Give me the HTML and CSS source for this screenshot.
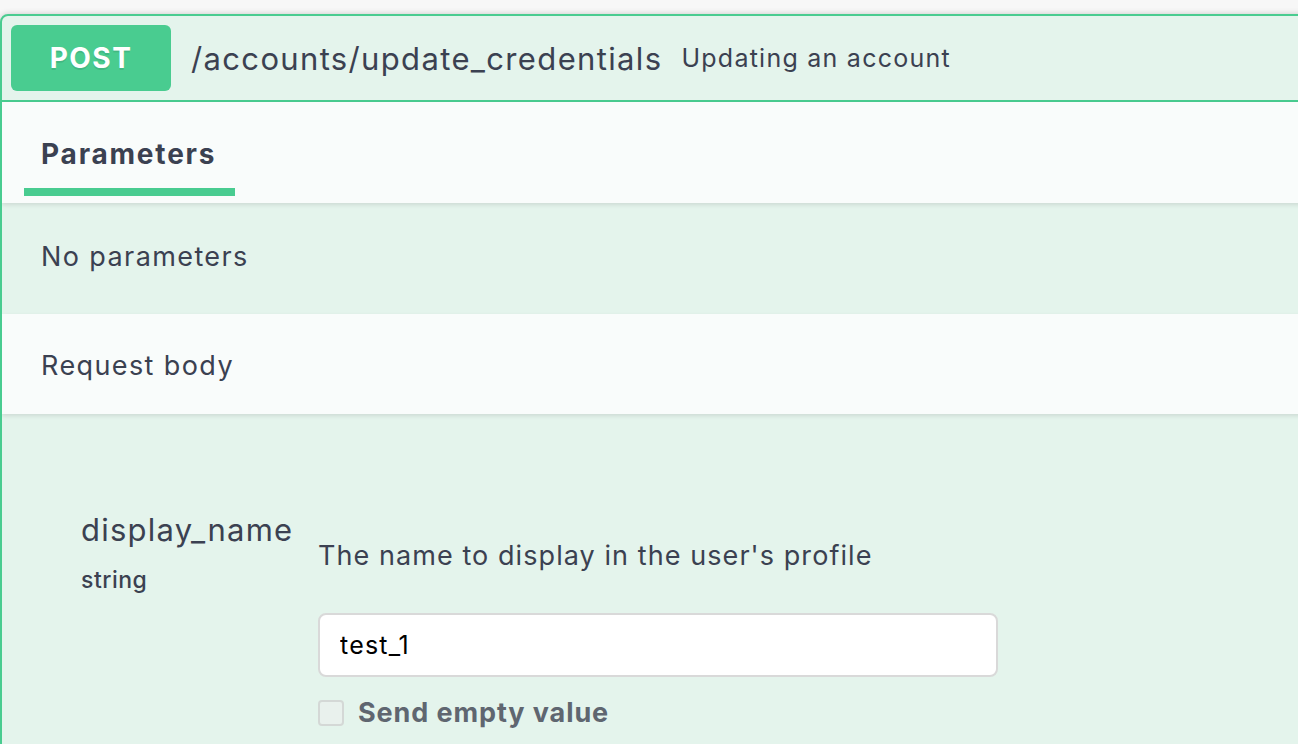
FILE: index.html
```html
<!DOCTYPE html>
<html>
<head>
<meta charset="utf-8">
<link rel="stylesheet" href="styles.css">
</head>
<body>
<div class="page">
  <div class="opblock">
    <div class="summary">
      <span class="method">POST</span>
      <span class="path">/accounts/update_credentials</span>
      <span class="desc">Updating an account</span>
    </div>
    <div class="tabs">
      <div class="tab">
        <span class="tab-label">Parameters</span>
        <span class="tab-bar"></span>
      </div>
    </div>
    <div class="noparams">No parameters</div>
    <div class="reqhead">Request body</div>
    <div class="body">
      <div class="param-row">
        <div class="param-name">
          <div class="pname">display_name</div>
          <div class="ptype">string</div>
        </div>
        <div class="param-col">
          <div class="pdesc">The name to display in the user's profile</div>
          <input class="pinput" type="text" value="test_1">
          <label class="empty">
            <span class="checkbox"></span>
            <span class="empty-label">Send empty value</span>
          </label>
        </div>
      </div>
    </div>
  </div>
</div>
</body>
</html>
```

FILE: styles.css
```css
html, body {
  margin: 0;
  padding: 0;
  background: #f7f7f7;
  overflow: hidden;
  font-family: Inter, "Noto Sans", "Noto Sans CJK JP", sans-serif;
  color: #3b4151;
}
.page {
  padding-top: 14px;
  width: 1330px;
}
.opblock {
  border: 2px solid #49cc90;
  border-radius: 8px;
  background: #e4f4ec;
  box-shadow: 0 0 6px rgba(0,0,0,.19);
  height: 760px;
  overflow: hidden;
}
.summary {
  display: flex;
  align-items: center;
  padding: 9px;
  border-bottom: 2px solid #49cc90;
  height: 66px;
}
.method {
  width: 160px;
  height: 66px;
  border-radius: 6px;
  background: #49cc90;
  color: #fff;
  font-weight: 700;
  font-size: 28px;
  letter-spacing: 1.5px;
  display: flex;
  align-items: center;
  justify-content: center;
  text-shadow: 0 2px 0 rgba(0,0,0,.1);
}
.path {
  margin-left: 20px;
  font-size: 31px;
  letter-spacing: 1.35px;
  color: #3b4151;
}
.desc {
  margin-left: 19px;
  font-size: 25px;
  letter-spacing: 1.25px;
  color: #3b4151;
}
.tabs {
  background: #f9fcfb;
  height: 101px;
  padding-left: 22px;
  display: flex;
  align-items: flex-end;
  box-shadow: 0 2px 4px rgba(0,0,0,.1);
  position: relative;
}
.tab {
  display: flex;
  flex-direction: column;
  padding-bottom: 7px;
}
.tab-label {
  font-weight: 700;
  font-size: 28px;
  letter-spacing: 1.8px;
  padding: 0 17px;
  line-height: 40px;
  color: #3b4151;
}
.tab-bar {
  display: block;
  height: 8px;
  margin-top: 14px;
  background: #49cc90;
  width: 211px;
}
.noparams {
  height: 111px;
  box-sizing: border-box;
  padding: 0 0 5px 39px;
  display: flex;
  align-items: center;
  font-size: 27px;
  letter-spacing: 1.4px;
}
.reqhead {
  height: 100px;
  box-sizing: border-box;
  padding: 3px 0 0 39px;
  background: #f9fcfb;
  display: flex;
  align-items: center;
  font-size: 27px;
  letter-spacing: 1.4px;
  box-shadow: 0 2px 4px rgba(0,0,0,.1);
  position: relative;
}
.body {
  padding: 94px 0 0 79px;
}
.param-row {
  display: flex;
}
.param-name {
  width: 237px;
}
.pname {
  font-size: 31px;
  line-height: 44px;
  letter-spacing: 1.25px;
}
.ptype {
  font-size: 23px;
  font-weight: 500;
  letter-spacing: 0.5px;
  margin-top: 12px;
  line-height: 32px;
}
.param-col {
  padding-top: 28px;
}
.pdesc {
  font-size: 27px;
  line-height: 40px;
  letter-spacing: 1.07px;
}
.pinput {
  display: block;
  box-sizing: border-box;
  margin-top: 37px;
  width: 680px;
  height: 64px;
  border: 2px solid #d9d9d9;
  border-radius: 8px;
  background: #fff;
  padding: 0 20px;
  font-family: Inter, "Noto Sans", sans-serif;
  font-size: 25px;
  letter-spacing: 1.2px;
  color: #000;
  outline: none;
}
.empty {
  display: flex;
  align-items: center;
  margin-top: 19px;
}
.checkbox {
  width: 22px;
  height: 22px;
  border: 2px solid #d4d8d6;
  border-radius: 4px;
  background: #e9f1ed;
}
.empty-label {
  margin-left: 14px;
  font-weight: 700;
  font-size: 27px;
  letter-spacing: 0.9px;
  color: #5f6670;
}
```
